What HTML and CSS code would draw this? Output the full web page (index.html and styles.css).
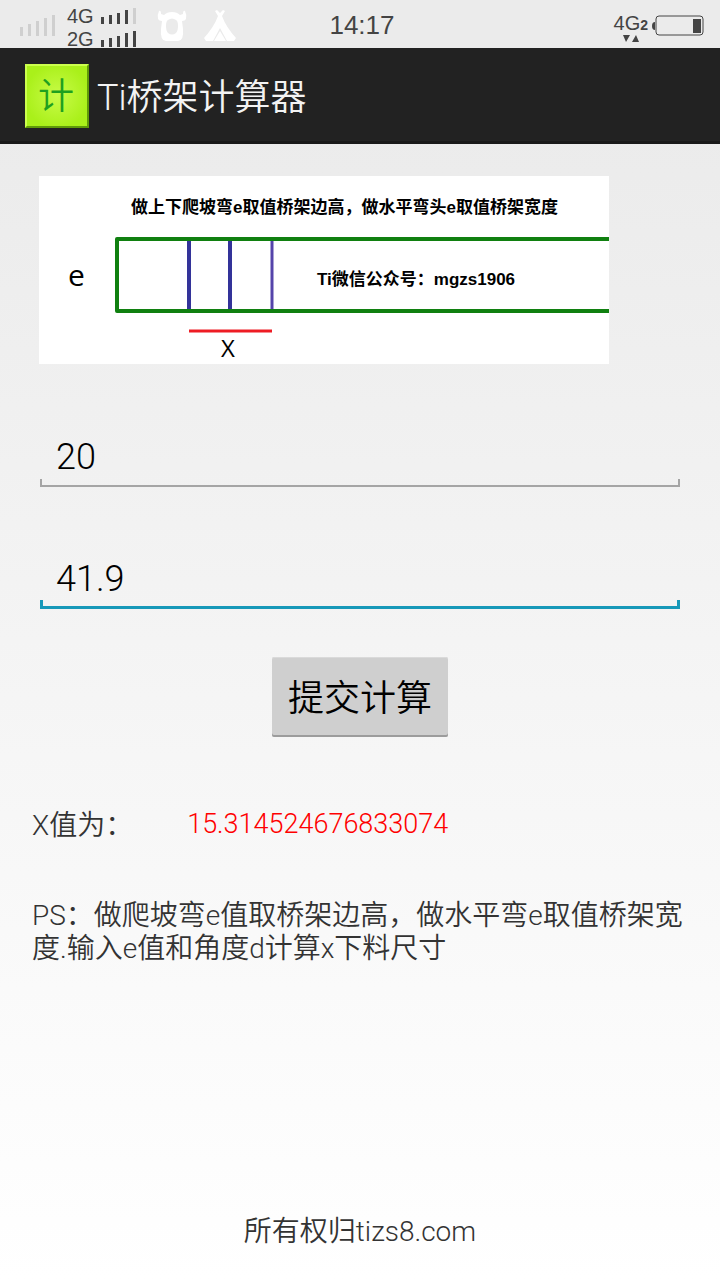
FILE: index.html
```html
<!DOCTYPE html>
<html lang="zh-CN">
<head>
  <meta charset="UTF-8">
  <meta name="viewport" content="width=device-width, initial-scale=1.0">
  <title>Ti桥架计算器</title>
  <link rel="stylesheet" href="styles.css">
</head>
<body>
  <div class="status-bar">
    <div class="status-left">
      <svg class="signal-off" width="36" height="24" viewBox="0 0 36 24" fill="#cfcfcf">
        <path d="M0 13h3v9H0zM8 10h3v12H8zM16 7h3v15h-3zM24 4h3v18h-3zM32 1h3v21h-3z"/>
      </svg>
      <div class="networks">
        <div class="network">
          <span>4G</span>
          <svg width="36" height="17" viewBox="0 0 36 17" fill="#444">
            <path d="M0 9h3v7H0zM8 7h3v9H8zM16 5h3v11h-3zM24 2h3v14h-3z"/>
            <path d="M32 0h3v16h-3z" fill="#cfcfcf"/>
          </svg>
        </div>
        <div class="network">
          <span>2G</span>
          <svg width="36" height="17" viewBox="0 0 36 17" fill="#444">
            <path d="M0 9h3v7H0zM8 7h3v9H8zM16 5h3v11h-3zM24 2h3v14h-3zM32 0h3v16h-3z"/>
          </svg>
        </div>
      </div>
      <svg class="notice" width="30" height="34" viewBox="0 0 30 34" fill="#fff">
        <path fill-rule="evenodd" d="M2 2Q0 6 1 10Q2 12 5 12L4 20Q3 32 9 32H21Q27 32 26 20L25 12Q28 12 29 10Q30 6 28 2Q26 1 26 5L23 6Q20 3 15 3Q10 3 7 6L4 5Q4 1 2 2ZM11 11Q15 8 19 11Q21 12 21 17Q21 22 19 24Q15 27 11 24Q9 22 9 17Q9 12 11 11Z"/>
      </svg>
      <svg class="notice" width="34" height="34" viewBox="0 0 34 34" fill="#fff">
        <path fill-rule="evenodd" d="M12 2L14 1L17 4L20 1L22 2L19 7Q23 18 33 29L31 32H24L17 19L10 32H3L1 29Q11 18 15 7ZM17 22L23 32H11Z"/>
      </svg>
    </div>
    <div class="clock">14:17</div>
    <div class="status-right">
      <div class="data">
        <div class="data-name">4G<b>2</b></div>
        <svg width="18" height="8" viewBox="0 0 18 8" fill="#444">
          <path d="M1 0h7L4 7zM10 7h7l-3 -7z"/>
        </svg>
      </div>
      <svg class="battery" width="53" height="22" viewBox="0 0 53 22">
        <path d="M4 7Q1 7 1 11Q1 15 4 15Z" fill="#444"/>
        <rect x="5" y="1" width="47" height="19" rx="3" fill="none" stroke="#444" stroke-width="1"/>
        <rect x="42" y="4" width="8" height="14" fill="#444"/>
      </svg>
    </div>
  </div>

  <header class="app-bar">
    <svg class="logo" width="64" height="64" viewBox="0 0 64 64">
      <defs>
        <radialGradient id="logo-bg">
          <stop offset="0" stop-color="#c8fb48"/>
          <stop offset="1" stop-color="#aaf01a"/>
        </radialGradient>
      </defs>
      <rect width="64" height="64" fill="url(#logo-bg)"/>
      <path d="M0 64V0h64l-2 2H2v60z" fill="#ccff4d"/>
      <path d="M64 0v64H0l2-2h60V2z" fill="#5f9a08"/>
      <text class="logo-text" x="31" y="45" text-anchor="middle">计</text>
    </svg>
    <h1 class="title">Ti桥架计算器</h1>
  </header>

  <main class="content">
    <svg class="figure" viewBox="0 0 570 188" role="img" aria-label="桥架示意图">
      <rect width="570" height="188" fill="#fff"/>
      <text class="figure-note" x="92" y="37">做上下爬坡弯e取值桥架边高，做水平弯头e取值桥架宽度</text>
      <g fill="none">
        <path d="M150 63v72M191 63v72" stroke="#333399" stroke-width="4"/>
        <path d="M233 63v72" stroke="#5544aa" stroke-width="3"/>
        <path d="M570 63H78v72h492" stroke="#108010" stroke-width="4" stroke-linejoin="round"/>
        <path d="M150 155h83" stroke="#ee1c24" stroke-width="3"/>
      </g>
      <text class="figure-note" x="278" y="109">Ti微信公众号：mgzs1906</text>
      <text class="figure-e" x="29" y="110">e</text>
      <text class="figure-x" x="182" y="181">X</text>
    </svg>

    <form class="form">
      <input class="input" id="e" type="text" value="20" aria-label="e值">
      <input class="input active" id="d" type="text" value="41.9" aria-label="角度d">
      <button class="submit" type="submit">提交计算</button>
    </form>

    <div class="result">
      <label class="result-label" for="x">X值为：</label>
      <output class="result-value" id="x">15.314524676833074</output>
    </div>
    <p class="tips">PS：做爬坡弯e值取桥架边高，做水平弯e取值桥架宽度.输入e值和角度d计算x下料尺寸</p>
  </main>

  <footer class="footer">所有权归tizs8.com</footer>

  <script>
    const form = document.querySelector('.form'),
          inputs = document.querySelectorAll('.input'),
          result = document.querySelector('.result-value');

    // 切换当前输入框的下划线颜色
    inputs.forEach((item) => {
      item.addEventListener('focus', function(){
        inputs.forEach((other) => other.classList.remove('active'));
        item.classList.add('active');
      })
    })

    // x = 2 * e * tan(d / 2)
    form.addEventListener('submit', function(event){
      event.preventDefault();
      const e = Number(inputs[0].value),
            d = Number(inputs[1].value);
      result.textContent = 2 * e * Math.tan(d / 2 * Math.PI / 180);
    })
  </script>
</body>
</html>
```
FILE: styles.css
```css
*{
  box-sizing: border-box;
}
body{
  display: flex;
  flex-direction: column;
  min-height: 100vh;
  margin: 0;
  background: linear-gradient(#e9e9e9, #fff);
  color: #333;
  font-family: Roboto, "Noto Sans CJK SC", sans-serif;
  font-size: 28px;
  font-weight: 350;
}

/* 状态栏 */
.status-bar{
  display: grid;
  grid-template-columns: 1fr auto 1fr;
  align-items: center;
  height: 48px;
  padding: 0 16px 0 20px;
  background: #ebebeb;
  color: #444;
  font-family: "Liberation Sans", sans-serif;
  font-weight: 400;
}
.status-left{
  display: flex;
  align-items: center;
}
.signal-off{
  margin-right: 11px;
}
.networks{
  margin-right: 20px;
  padding-top: 5px;
}
.network{
  display: flex;
  align-items: center;
  gap: 7px;
  height: 23px;
  font-size: 20px;
  line-height: 23px;
}
.notice{
  margin-right: 16px;
}
.clock{
  font-size: 26px;
}
.status-right{
  display: flex;
  justify-content: flex-end;
  align-items: center;
  gap: 3px;
}
.data{
  display: flex;
  flex-direction: column;
  align-items: center;
  padding-top: 4px;
}
.data-name{
  font-size: 20px;
  line-height: 20px;
}
.data-name b{
  font-size: 14px;
  font-weight: 700;
}

/* 标题栏 */
.app-bar{
  display: flex;
  align-items: center;
  gap: 8px;
  height: 96px;
  padding: 2px 25px 0;
  border-bottom: 3px solid #191919;
  background: #222;
}
.logo-text{
  fill: #1fa01f;
  font-size: 36px;
}
.title{
  margin: 0;
  padding-top: 4px;
  color: #f3f3f3;
  font-size: 36px;
  font-weight: 350;
  line-height: 52px;
}

.content{
  flex: 1;
  padding: 32px;
}
.figure{
  display: block;
  width: 570px;
  max-width: 100%;
  margin-left: 7px;
}
.figure-note{
  font-family: "Liberation Sans", "Noto Sans CJK SC", sans-serif;
  font-size: 17px;
  font-weight: 700;
}
.figure-e{
  font-family: "Open Sans", sans-serif;
  font-size: 30px;
  font-weight: 400;
}
.figure-x{
  font-family: "Open Sans", sans-serif;
  font-size: 24px;
  font-weight: 400;
}

/* 输入框 */
.form{
  display: flex;
  flex-direction: column;
  align-items: center;
  padding: 59px 8px 0;
}
.input{
  width: 100%;
  height: 64px;
  margin-bottom: 58px;
  padding: 4px 16px 0;
  border: 0;
  outline: 0;
  background:
    linear-gradient(#a5a5a5, #a5a5a5) left bottom / 2px 8px no-repeat,
    linear-gradient(#a5a5a5, #a5a5a5) right bottom / 2px 8px no-repeat,
    linear-gradient(#a5a5a5, #a5a5a5) left bottom / 100% 2px no-repeat;
  color: #000;
  font: inherit;
  font-size: 36px;
}
.input.active{
  margin-bottom: 48px;
  background:
    linear-gradient(#1899b9, #1899b9) left bottom / 3px 9px no-repeat,
    linear-gradient(#1899b9, #1899b9) right bottom / 3px 9px no-repeat,
    linear-gradient(#1899b9, #1899b9) left bottom / 100% 3px no-repeat;
}
.submit{
  height: 80px;
  padding: 0 16px 4px;
  border: 0;
  border-radius: 2px;
  background: #cfcfcf;
  box-shadow: inset 0 -2px #9c9c9c, inset 0 1px #dadada;
  color: #000;
  font: inherit;
  font-size: 36px;
}

/* 计算结果 */
.result{
  display: flex;
  align-items: center;
  gap: 54px;
  margin-top: 66px;
}
.result-value{
  padding-top: 2px;
  color: #f00;
  font-size: 27px;
}
.tips{
  margin: 56px 0 0;
  line-height: 33px;
}
.footer{
  padding: 0 32px 31px;
  text-align: center;
}
```
